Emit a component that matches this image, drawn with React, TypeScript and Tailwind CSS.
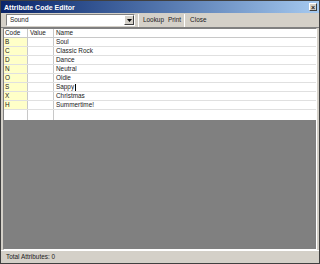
import React from 'react';

const rows = [
  { code: 'B', name: 'Soul' },
  { code: 'C', name: 'Classic Rock' },
  { code: 'D', name: 'Dance' },
  { code: 'N', name: 'Neutral' },
  { code: 'O', name: 'Oldie' },
  { code: 'S', name: 'Sappy', caret: true },
  { code: 'X', name: 'Christmas' },
  { code: 'H', name: 'Summertime!' },
];

const App: React.FC = () => {
  return (
    <div
      className="w-[320px] h-[264px] bg-[#d4d0c8] flex flex-col border border-[#404040] overflow-hidden text-[6.4px] leading-none text-[#1a1a1a]"
      style={{ fontFamily: '"Liberation Sans", Arial, sans-serif' }}
    >
      {/* ── Title bar ── */}
      <div className="h-[12px] shrink-0 flex items-center justify-between pl-[3px] pr-[2px] bg-gradient-to-r from-[#0a246a] to-[#a6caf0]">
        <span className="text-white font-bold text-[7px]">Attribute Code Editor</span>
        <div className="w-[8px] h-[8px] bg-[#d4d0c8] border border-t-white border-l-white border-r-[#404040] border-b-[#404040] flex items-center justify-center text-[7px] font-bold leading-none">
          ×
        </div>
      </div>

      {/* ── Toolbar ── */}
      <div className="h-[15px] shrink-0 flex items-center pl-[5px] border-b border-[#808080]">
        <div className="w-[129px] h-[12px] bg-white border border-t-[#808080] border-l-[#808080] border-r-white border-b-white flex items-center justify-between">
          <span className="pl-[3px]">Sound</span>
          <div className="w-[10px] h-full bg-[#d4d0c8] border border-t-white border-l-white border-r-[#404040] border-b-[#404040] flex items-center justify-center">
            <svg width="5" height="3" viewBox="0 0 5 3">
              <path d="M0 0h5L2.5 3z" fill="#000" />
            </svg>
          </div>
        </div>
        <div className="w-[1px] h-[13px] bg-[#808080] border-r border-white ml-[3px] mr-[4px]" />
        <span className="mr-[4px]">Lookup</span>
        <span className="mr-[3px]">Print</span>
        <div className="w-[1px] h-[13px] bg-[#808080] border-r border-white mr-[5px]" />
        <span>Close</span>
      </div>

      {/* ── Grid ── */}
      <div className="flex-1 mx-[2px] flex flex-col border border-t-[#808080] border-l-[#808080] border-r-white border-b-white">
        <div className="flex h-[9px] shrink-0 bg-white border-b border-[#c8c8c8] items-center">
          <div className="w-[24px] pl-[1px] border-r border-[#c8c8c8] h-full flex items-center">Code</div>
          <div className="w-[26px] pl-[2px] border-r border-[#c8c8c8] h-full flex items-center">Value</div>
          <div className="flex-1 pl-[2px] h-full flex items-center">Name</div>
        </div>
        {rows.map((r) => (
          <div key={r.code} className="flex h-[9px] shrink-0 bg-white border-b border-[#e0e0e0]">
            <div className="w-[24px] pl-[1px] bg-[#ffffc8] border-r border-[#c8c8c8] flex items-center">{r.code}</div>
            <div className="w-[26px] border-r border-[#c8c8c8]" />
            <div className="flex-1 pl-[2px] flex items-center">
              {r.name}
              {r.caret && <span className="w-[1px] h-[7px] bg-black ml-[1px]" />}
            </div>
          </div>
        ))}
        <div className="flex h-[10px] shrink-0 bg-white">
          <div className="w-[24px] border-r border-[#c8c8c8]" />
          <div className="w-[26px] border-r border-[#c8c8c8]" />
          <div className="flex-1" />
        </div>
        <div className="flex-1 bg-[#808080]" />
      </div>

      {/* ── Status bar ── */}
      <div className="h-[13px] shrink-0 flex items-center pl-[5px] border-t border-white">
        <span>Total Attributes: 0</span>
      </div>
    </div>
  );
};

export default App;
